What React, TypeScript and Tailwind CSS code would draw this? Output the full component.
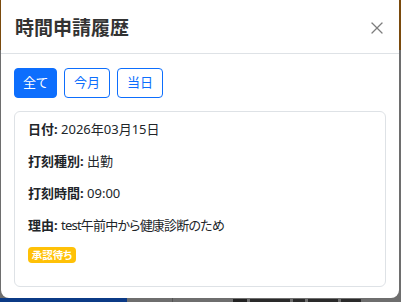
import { X } from "lucide-react";

const rows: { label: string; value: string; tight?: boolean }[] = [
  { label: "日付", value: "2026年03月15日" },
  { label: "打刻種別", value: "出勤" },
  { label: "打刻時間", value: "09:00" },
  { label: "理由", value: "test午前中から健康診断のため", tight: true },
];

const font = { fontFamily: '"Noto Sans", "Noto Sans CJK JP", sans-serif' };

export default function App() {
  return (
    <div
      className="relative w-[401px] h-[302px] overflow-hidden bg-[#6e6e6e] text-[#212529]"
      style={font}
    >
      {/* dimmed page behind the modal */}
      <div className="h-[50px] bg-[#7a4a0c]" />
      <div className="h-[248px]" />
      <div className="flex h-[4px]">
        <div className="w-[127px] bg-[#0b3a86]" />
        <div className="w-[46px] bg-[#6e6e6e] border-r border-[#555]" />
        <div className="flex flex-1 items-start gap-[3px] pl-[60px] pt-[1px]">
          <div className="h-[3px] w-[14px] bg-[#222]" />
          <div className="h-[3px] w-[40px] bg-[#2a2a2a]" />
          <div className="h-[3px] w-[12px] bg-[#2a2a2a]" />
          <div className="h-[3px] w-[30px] bg-[#2a2a2a]" />
          <div className="h-[3px] w-[20px] bg-[#2a2a2a]" />
        </div>
      </div>

      {/* modal */}
      <div className="absolute left-[1px] top-0 w-[398px] h-[298px] rounded-b-[8px] bg-white [font-feature-settings:'palt']">
        <div className="flex items-start justify-between border-b border-[#dee2e6] pl-[14px] pr-[12px] pt-[13px] pb-[10px]">
          <h5 className="text-[19px] leading-[30px] font-bold text-[#333]">時間申請履歴</h5>
          <button className="mt-[5px] flex h-[20px] w-[20px] items-center justify-center text-[#7d7d7d]">
            <X size={20} strokeWidth={1.5} />
          </button>
        </div>

        <div className="px-[13px] pt-[14px]">
          <div className="mb-[13px] flex gap-[7px]">
            <button className="h-[30px] w-[43px] rounded-[4px] border border-[#0d6efd] bg-[#0d6efd] text-[13px] text-white">
              全て
            </button>
            <button className="h-[30px] w-[46px] rounded-[4px] border border-[#0d6efd] bg-white text-[13px] text-[#0d6efd]">
              今月
            </button>
            <button className="h-[30px] w-[46px] rounded-[4px] border border-[#0d6efd] bg-white text-[13px] text-[#0d6efd]">
              当日
            </button>
          </div>

          <div className="h-[176px] rounded-[6px] border border-[#dee2e6] pl-[13px] pt-[7px]">
            {rows.map((r) => (
              <p key={r.label} className="mb-[11px] text-[13px] leading-[21px]">
                <span className="font-bold">{r.label}:</span>{" "}
                <span className={r.tight ? "tracking-[-0.8px]" : ""}>{r.value}</span>
              </p>
            ))}
            <div className="mt-[3px] flex">
              <span className="flex h-[16px] w-[48px] items-center justify-center rounded-[4px] bg-[#ffc107] text-[10.5px] font-bold leading-none text-white">
                承認待ち
              </span>
            </div>
          </div>
        </div>
      </div>
    </div>
  );
}
